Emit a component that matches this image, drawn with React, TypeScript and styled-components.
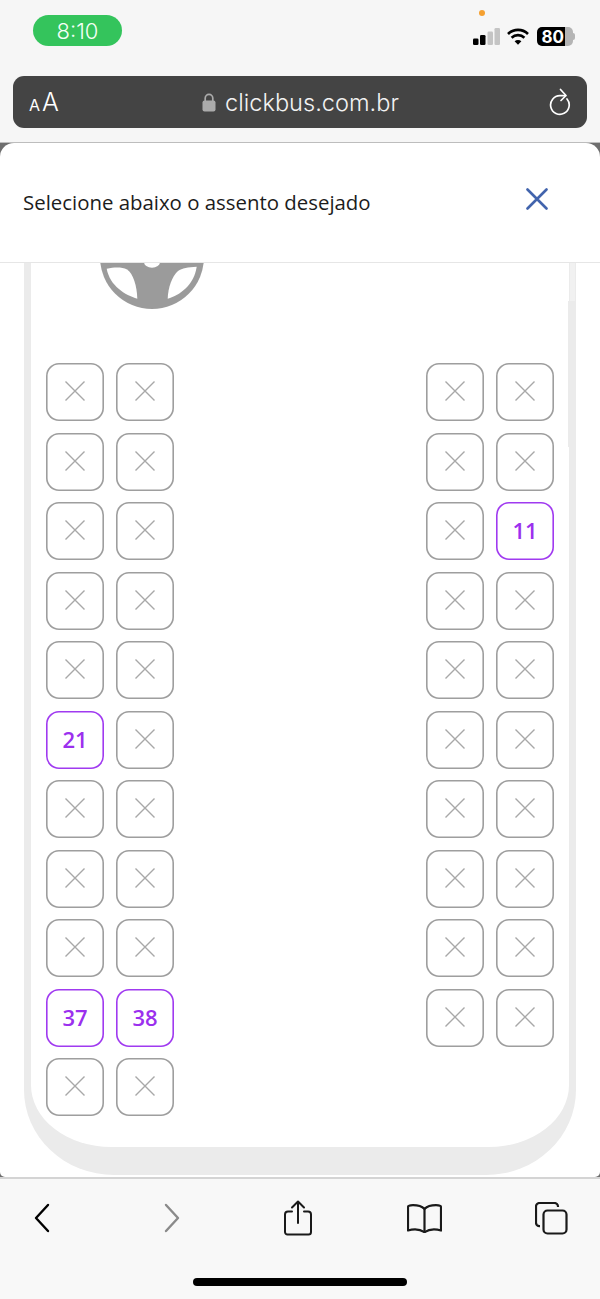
import React from 'react'
import styled, { createGlobalStyle } from 'styled-components'

const GlobalStyle = createGlobalStyle`
  html, body {
    margin: 0;
    padding: 0;
    background: #f6f6f6;
  }
  * {
    box-sizing: border-box;
  }
`

type SeatRow = [number | null, number | null]

const leftRows: SeatRow[] = [
  [null, null],
  [null, null],
  [null, null],
  [null, null],
  [null, null],
  [21, null],
  [null, null],
  [null, null],
  [null, null],
  [37, 38],
  [null, null],
]

const rightRows: SeatRow[] = [
  [null, null],
  [null, null],
  [null, 11],
  [null, null],
  [null, null],
  [null, null],
  [null, null],
  [null, null],
  [null, null],
  [null, null],
]

const Seat: React.FC<{ number: number | null }> = ({ number }) =>
  number === null ? (
    <SeatBox>
      <svg width='20' height='20' viewBox='0 0 20 20' fill='none' stroke='#a8a8a8' strokeWidth='1.4'>
        <path d='M0.500 0.500l19 19M19.500 0.500l-19 19' />
      </svg>
    </SeatBox>
  ) : (
    <SeatBox $free>{number}</SeatBox>
  )

const SeatColumn: React.FC<{ rows: SeatRow[] }> = ({ rows }) => (
  <Column>
    {rows.map((row, i) => (
      <Row key={i}>
        <Seat number={row[0]} />
        <Seat number={row[1]} />
      </Row>
    ))}
  </Column>
)

const App: React.FC = () => {
  return (
    <Phone>
      <GlobalStyle />
      <StatusBar>
        <TimePill>8:10</TimePill>
        <StatusIcons>
          <OrangeDot />
          <svg width='27' height='17' viewBox='0 0 27 17'>
            <rect x='0' y='10.500' width='5.500' height='6.500' rx='1.300' fill='#000' />
            <rect x='7' y='7' width='5.500' height='10' rx='1.300' fill='#000' />
            <rect x='14.500' y='3.500' width='5.500' height='13.500' rx='1.300' fill='#c4c4c4' />
            <rect x='21.500' y='0' width='5.500' height='17' rx='1.300' fill='#c4c4c4' />
          </svg>
          <svg width='22' height='17' viewBox='0 0 22 17' fill='none' stroke='#000' strokeWidth='2.600'>
            <path d='M1 6a14.200 14.200 0 0 1 20 0' />
            <path d='M4.600 9.700a9.200 9.200 0 0 1 12.800 0' />
            <path d='M11 16.800l-3.400-3.500a4.800 4.800 0 0 1 6.800 0z' fill='#000' stroke='none' />
          </svg>
          <Battery>
            <BatteryLevel>80</BatteryLevel>
            <BatteryRest />
            <BatteryCap />
          </Battery>
        </StatusIcons>
      </StatusBar>

      <AddressBar>
        <TextSize>
          <small>A</small>A
        </TextSize>
        <Url>
          <svg width='14' height='19' viewBox='0 0 14 19'>
            <path d='M3.200 8V5.200a3.800 3.800 0 0 1 7.600 0V8' fill='none' stroke='#ababab' strokeWidth='1.700' />
            <rect x='0.500' y='7.500' width='13' height='11' rx='2' fill='#ababab' />
          </svg>
          clickbus.com.br
        </Url>
        <ReloadSlot>
          <svg width='24' height='28' viewBox='0 0 24 28' fill='none' stroke='#fff' strokeWidth='1.700' strokeLinecap='round' strokeLinejoin='round'>
            <path d='M17.500 7.700H12A9.300 9.300 0 1 0 19 11' />
            <path d='M12.500 1.500l5.500 6-5 5' />
          </svg>
        </ReloadSlot>
      </AddressBar>

      <Viewport>
        <Sheet>
          <SheetHeader>
            <SheetTitle>Selecione abaixo o assento desejado</SheetTitle>
            <svg width='22' height='22' viewBox='0 0 22 22' fill='none' stroke='#4264ad' strokeWidth='2.600' strokeLinecap='round'>
              <path d='M1.500 1.500l19 19M20.500 1.500l-19 19' />
            </svg>
          </SheetHeader>
          <SheetBody>
            <BusShell>
              <BusInner>
                <WheelSlot>
                  <svg width='104' height='46' viewBox='100 262 104 46'>
                    <circle cx='152' cy='256' r='52' fill='#9b9b9b' />
                    <path d='M106.700 267.700C115 266 122 266 127 268.500C133 272 137 285 137.300 297.700C125 294 110 285 106.700 267.700Z' fill='#fff' />
                    <path d='M196.700 265.700C188 266 182 267 178 270C172 275 168 287 167.700 297.700C180 294 194 284 196.700 265.700Z' fill='#fff' />
                    <ellipse cx='152' cy='261' rx='8' ry='5.800' fill='#fff' />
                  </svg>
                </WheelSlot>
                <Cabin>
                  <SeatColumn rows={leftRows} />
                  <SeatColumn rows={rightRows} />
                </Cabin>
              </BusInner>
            </BusShell>
            <ThumbCap />
            <ScrollThumb />
          </SheetBody>
        </Sheet>
      </Viewport>

      <Toolbar>
        <ToolRow>
          <ToolSlot>
            <svg width='18' height='30' viewBox='0 0 18 30' fill='none' stroke='#000' strokeWidth='2.400' strokeLinecap='round' strokeLinejoin='round'>
              <path d='M15 2L3 15l12 13' />
            </svg>
          </ToolSlot>
          <ToolSlot $nudge={3}>
            <svg width='18' height='30' viewBox='0 0 18 30' fill='none' stroke='#8a8a8a' strokeWidth='2.400' strokeLinecap='round' strokeLinejoin='round'>
              <path d='M3 2l12 13L3 28' />
            </svg>
          </ToolSlot>
          <ToolSlot>
            <svg width='28' height='36' viewBox='0 0 28 36' fill='none' stroke='#1a1a1a' strokeWidth='2' strokeLinecap='round' strokeLinejoin='round'>
              <path d='M8 11.500H4a3 3 0 0 0-3 3V32a2.500 2.500 0 0 0 2.500 2.500h21A2.500 2.500 0 0 0 27 32V14.500a3 3 0 0 0-3-3h-4' />
              <path d='M14 23V1.500M8 7.500l6-6 6 6' />
            </svg>
          </ToolSlot>
          <ToolSlot>
            <svg width='35' height='29' viewBox='0 0 35 29' fill='none' stroke='#1a1a1a' strokeWidth='2.200' strokeLinecap='round' strokeLinejoin='round'>
              <path d='M17.500 5C15 2.500 11 1.200 6 1.200c-1.500 0-3 .2-4 .6C1.300 2 1 2.600 1 3.300V26.500c5.500-1.700 12-1.300 16.500 1.600C22 25.200 28.500 24.800 34 26.500V3.300c0-.7-.3-1.300-1-1.500-1-.4-2.500-.6-4-.6C24 1.200 20 2.500 17.500 5z' />
              <path d='M17.500 5v23' />
            </svg>
          </ToolSlot>
          <ToolSlot>
            <svg width='33' height='33' viewBox='0 0 33 33' fill='none' stroke='#1a1a1a' strokeWidth='2.200' strokeLinejoin='round'>
              <path d='M5 24.200H4.500a3.500 3.500 0 0 1-3.500-3.500V4.500A3.500 3.500 0 0 1 4.500 1h15A3.500 3.500 0 0 1 23 4.500v.5' />
              <rect x='8.500' y='8.500' width='23' height='23' rx='4' />
            </svg>
          </ToolSlot>
        </ToolRow>
        <HomeBar />
      </Toolbar>
    </Phone>
  )
}

const Phone = styled.div`
  display: flex;
  flex-direction: column;
  width: 600px;
  height: 1299px;
  overflow: hidden;
  background: #f6f6f6;
  font-family: 'Open Sans', sans-serif;
`

const StatusBar = styled.div`
  display: flex;
  justify-content: space-between;
  align-items: flex-start;
  height: 76px;
  padding: 15px 25px 0 33px;
`

const TimePill = styled.div`
  display: flex;
  align-items: center;
  justify-content: center;
  width: 89px;
  height: 31px;
  border-radius: 16px;
  background: #34c45c;
  color: #f4fff6;
  font-family: 'Inter', 'Liberation Sans', sans-serif;
  font-size: 22px;
  font-weight: 300;
`

const StatusIcons = styled.div`
  position: relative;
  display: flex;
  align-items: center;
  gap: 7px;
  margin-top: 12px;
`

const OrangeDot = styled.span`
  position: absolute;
  top: -17px;
  left: 6px;
  width: 6px;
  height: 6px;
  border-radius: 50%;
  background: #f5a030;
`

const Battery = styled.div`
  position: relative;
  display: flex;
  width: 38px;
  height: 19px;
  margin-left: 1px;
`

const BatteryLevel = styled.span`
  display: flex;
  align-items: center;
  justify-content: flex-end;
  width: 28px;
  padding-right: 1px;
  border-radius: 5px 0 0 5px;
  background: #000;
  color: #fff;
  font-family: 'Inter', 'Liberation Sans', sans-serif;
  font-size: 17px;
  font-weight: 700;
`

const BatteryRest = styled.span`
  width: 8px;
  border-radius: 0 5px 5px 0;
  background: #b4b4b4;
`

const BatteryCap = styled.span`
  position: absolute;
  top: 6px;
  right: 0;
  width: 2px;
  height: 7px;
  border-radius: 0 2px 2px 0;
  background: #b4b4b4;
`

const AddressBar = styled.div`
  display: flex;
  align-items: center;
  width: 574px;
  height: 52px;
  margin-left: 13px;
  padding: 0 15px;
  border-radius: 11px;
  background: #444444;
  color: #fff;
  font-family: 'Inter', 'Liberation Sans', sans-serif;
`

const TextSize = styled.div`
  flex: 1;
  padding-left: 1px;
  font-size: 25px;
  font-weight: 300;

  small {
    margin-right: 2px;
    font-size: 16px;
    font-weight: 400;
  }
`

const Url = styled.div`
  display: flex;
  align-items: center;
  gap: 9px;
  color: #f2f2f2;
  font-size: 23.6px;
  font-weight: 300;
`

const ReloadSlot = styled.div`
  display: flex;
  flex: 1;
  justify-content: flex-end;
`

const Viewport = styled.div`
  flex: 1;
  margin-top: 14px;
  border-top: 1px solid #bdbdbd;
  background: #6e6e6e;
  min-height: 0;
`

const Sheet = styled.div`
  display: flex;
  flex-direction: column;
  height: 100%;
  overflow: hidden;
  border-radius: 14px 14px 5px 5px;
  background: #fff;
`

const SheetHeader = styled.div`
  display: flex;
  align-items: center;
  justify-content: space-between;
  flex: none;
  height: 120px;
  padding: 0 52px 8px 23px;
  border-bottom: 1px solid #e6e6e6;
`

const SheetTitle = styled.div`
  margin-top: 7px;
  color: #1c1c1c;
  font-size: 20.4px;
`

const SheetBody = styled.div`
  position: relative;
  flex: 1;
  min-height: 0;
  padding: 0 24px 2px;
`

const BusShell = styled.div`
  height: 100%;
  padding: 0 7px 28px;
  border-radius: 0 0 90px 90px / 0 0 85px 85px;
  background: #ebebeb;
`

const BusInner = styled.div`
  height: 100%;
  padding: 0 15px;
  border-radius: 0 0 80px 80px / 0 0 62px 62px;
  background: #fff;
`

const WheelSlot = styled.div`
  display: flex;
  height: 100px;
  padding-left: 54px;

  svg {
    display: block;
  }
`

const Cabin = styled.div`
  display: flex;
  justify-content: space-between;
`

const Column = styled.div`
  display: flex;
  flex-direction: column;
  gap: 11.5px;
`

const Row = styled.div`
  display: flex;
  gap: 12px;
`

// inset ring instead of a border so the outline can sit between 1px and 2px
const SeatBox = styled.div<{ $free?: boolean }>`
  display: flex;
  align-items: center;
  justify-content: center;
  width: 58px;
  height: 58px;
  padding-bottom: 2px;
  border-radius: 13px;
  box-shadow: inset 0 0 0 1.6px ${({ $free }) => ($free ? '#a03af0' : '#9e9e9e')};
  color: #9b30ee;
  font-size: 22px;
  font-weight: 600;
`

// lighter stub of the scroll indicator above its solid part
const ThumbCap = styled.div`
  position: absolute;
  top: 0;
  right: 25px;
  width: 5px;
  height: 38px;
  background: #f1f1f1;
`

const ScrollThumb = styled.div`
  position: absolute;
  top: 38px;
  right: 24px;
  width: 8px;
  height: 146px;
  background: #ebebeb;
`

const Toolbar = styled.div`
  display: flex;
  flex-direction: column;
  align-items: center;
  flex: none;
  height: 122px;
  border-top: 2px solid #d4d4d4;
  background: #f8f8f8;
`

const ToolRow = styled.div`
  display: flex;
  align-items: center;
  justify-content: space-between;
  width: 100%;
  height: 78px;
  padding: 0 29px 0 22px;
`

const ToolSlot = styled.div<{ $nudge?: number }>`
  display: flex;
  justify-content: center;
  width: 40px;
  margin-left: ${({ $nudge }) => $nudge ?? 0}px;
`

const HomeBar = styled.div`
  width: 214px;
  height: 8px;
  margin-top: 21px;
  border-radius: 4px;
  background: #000;
`

export default App
